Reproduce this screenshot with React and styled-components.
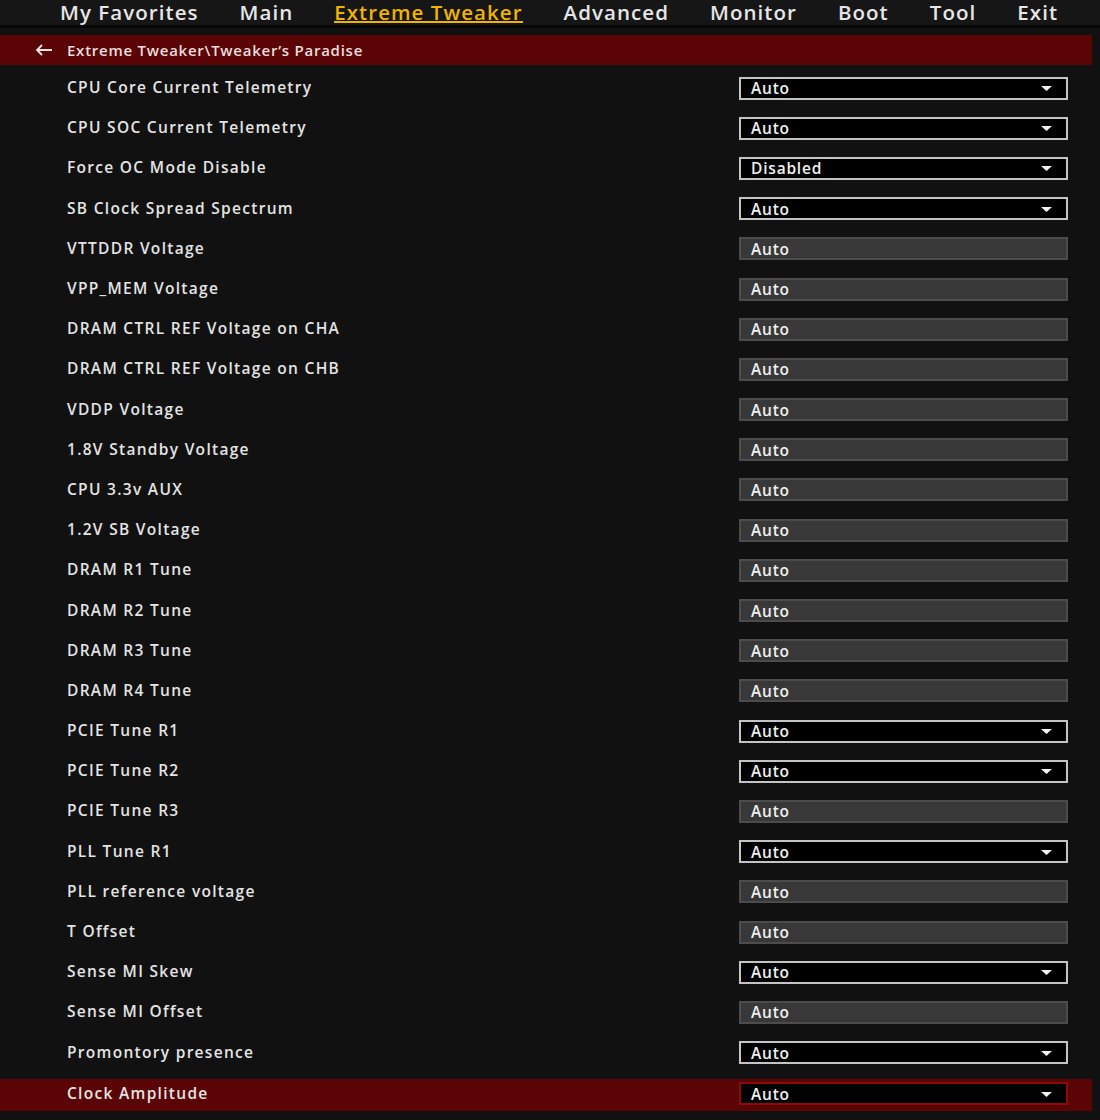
import React from "react";
import styled, { createGlobalStyle } from "styled-components";

const Global = createGlobalStyle`
  html, body { margin: 0; padding: 0; background: #111111; }
  body { font-family: "Open Sans", "Noto Sans", sans-serif; }
`;

const Page = styled.div`
  width: 1100px;
  height: 1120px;
  background: #111111;
  overflow: hidden;
  display: flex;
  flex-direction: column;
`;

const Nav = styled.nav`
  height: 25px;
  background: #161616;
  border-bottom: 3px solid #060606;
  display: flex;
  align-items: flex-start;
  gap: 41px;
  padding-left: 60px;
`;

const NavItem = styled.span`
  font-size: 20.5px;
  font-weight: 600;
  letter-spacing: 1.05px;
  line-height: 24px;
  color: ${(p) => (p.$active ? "#f0b400" : "#e6e6e6")};
  position: relative;
  ${(p) =>
    p.$active &&
    `
    &::after {
      content: "";
      position: absolute;
      left: 0;
      right: 0;
      bottom: 1px;
      height: 2px;
      background: #f0b400;
    }
  `}
`;

const Content = styled.div`
  width: 1092px;
  padding-top: 7px;
  display: flex;
  flex-direction: column;
`;

const Crumb = styled.div`
  height: 30px;
  background: #5a0405;
  display: flex;
  align-items: center;
  gap: 14px;
  padding-left: 35px;
  font-size: 15px;
  font-weight: 600;
  letter-spacing: 0.75px;
  color: #ecdede;
`;

const Rows = styled.div`
  display: flex;
  flex-direction: column;
  padding-top: 4px;
`;

const Row = styled.div`
  height: 40.2px;
  display: flex;
  align-items: center;
`;

const RowBand = styled.div`
  flex: 1;
  height: 32px;
  display: flex;
  align-items: center;
  padding-left: 67px;
  padding-right: 24px;
  background: ${(p) => (p.$selected ? "#5a0405" : "transparent")};
  margin-top: ${(p) => (p.$selected ? "2px" : "0")};
`;

const Label = styled.span`
  font-size: 15.5px;
  font-weight: 600;
  letter-spacing: 1.3px;
  color: #e4e4e4;
  margin-top: -4px;
`;

const Field = styled.div`
  margin-left: auto;
  width: 329px;
  height: 23px;
  box-sizing: border-box;
  display: flex;
  align-items: center;
  padding: 0 14px 0 10px;
  margin-top: -2px;
  font-size: 15.5px;
  font-weight: 600;
  letter-spacing: 0.8px;
  color: #f0f0f0;
  border: 2px solid
    ${(p) => (p.$kind === "ro" ? "#4c4c4c" : p.$selected ? "#8c0a0a" : "#c4c4c4")};
  background: ${(p) => (p.$kind === "ro" ? "#383838" : "#000000")};
`;

const Value = styled.span`
  flex: 1;
`;

const Caret = styled.svg`
  width: 11px;
  height: 5px;
  flex: none;
  margin-top: 1px;
`;

const items = [
  ["CPU Core Current Telemetry", "Auto", "dd"],
  ["CPU SOC Current Telemetry", "Auto", "dd"],
  ["Force OC Mode Disable", "Disabled", "dd"],
  ["SB Clock Spread Spectrum", "Auto", "dd"],
  ["VTTDDR Voltage", "Auto", "ro"],
  ["VPP_MEM Voltage", "Auto", "ro"],
  ["DRAM CTRL REF Voltage on CHA", "Auto", "ro"],
  ["DRAM CTRL REF Voltage on CHB", "Auto", "ro"],
  ["VDDP Voltage", "Auto", "ro"],
  ["1.8V Standby Voltage", "Auto", "ro"],
  ["CPU 3.3v AUX", "Auto", "ro"],
  ["1.2V SB Voltage", "Auto", "ro"],
  ["DRAM R1 Tune", "Auto", "ro"],
  ["DRAM R2 Tune", "Auto", "ro"],
  ["DRAM R3 Tune", "Auto", "ro"],
  ["DRAM R4 Tune", "Auto", "ro"],
  ["PCIE Tune R1", "Auto", "dd"],
  ["PCIE Tune R2", "Auto", "dd"],
  ["PCIE Tune R3", "Auto", "ro"],
  ["PLL Tune R1", "Auto", "dd"],
  ["PLL reference voltage", "Auto", "ro"],
  ["T Offset", "Auto", "ro"],
  ["Sense MI Skew", "Auto", "dd"],
  ["Sense MI Offset", "Auto", "ro"],
  ["Promontory presence", "Auto", "dd"],
  ["Clock Amplitude", "Auto", "dd", true],
];

const tabs = ["My Favorites", "Main", "Extreme Tweaker", "Advanced", "Monitor", "Boot", "Tool", "Exit"];

export default function App() {
  return (
    <Page>
      <Global />
      <Nav>
        {tabs.map((t) => (
          <NavItem key={t} $active={t === "Extreme Tweaker"}>
            {t}
          </NavItem>
        ))}
      </Nav>
      <Content>
        <Crumb>
          <svg width="18" height="12" viewBox="0 0 18 12">
            <path d="M7 1 L2 6 L7 11 M2 6 H17" fill="none" stroke="#f0e6e6" strokeWidth="1.8" />
          </svg>
          <span>Extreme Tweaker\Tweaker’s Paradise</span>
        </Crumb>
        <Rows>
          {items.map(([label, value, kind, sel]) => (
            <Row key={label}>
              <RowBand $selected={sel}>
                <Label>{label}</Label>
                <Field $kind={kind} $selected={sel}>
                  <Value>{value}</Value>
                  {kind === "dd" && (
                    <Caret viewBox="0 0 11 5">
                      <path d="M0 0 H11 L5.5 5 Z" fill="#f4f4f4" />
                    </Caret>
                  )}
                </Field>
              </RowBand>
            </Row>
          ))}
        </Rows>
      </Content>
    </Page>
  );
}
